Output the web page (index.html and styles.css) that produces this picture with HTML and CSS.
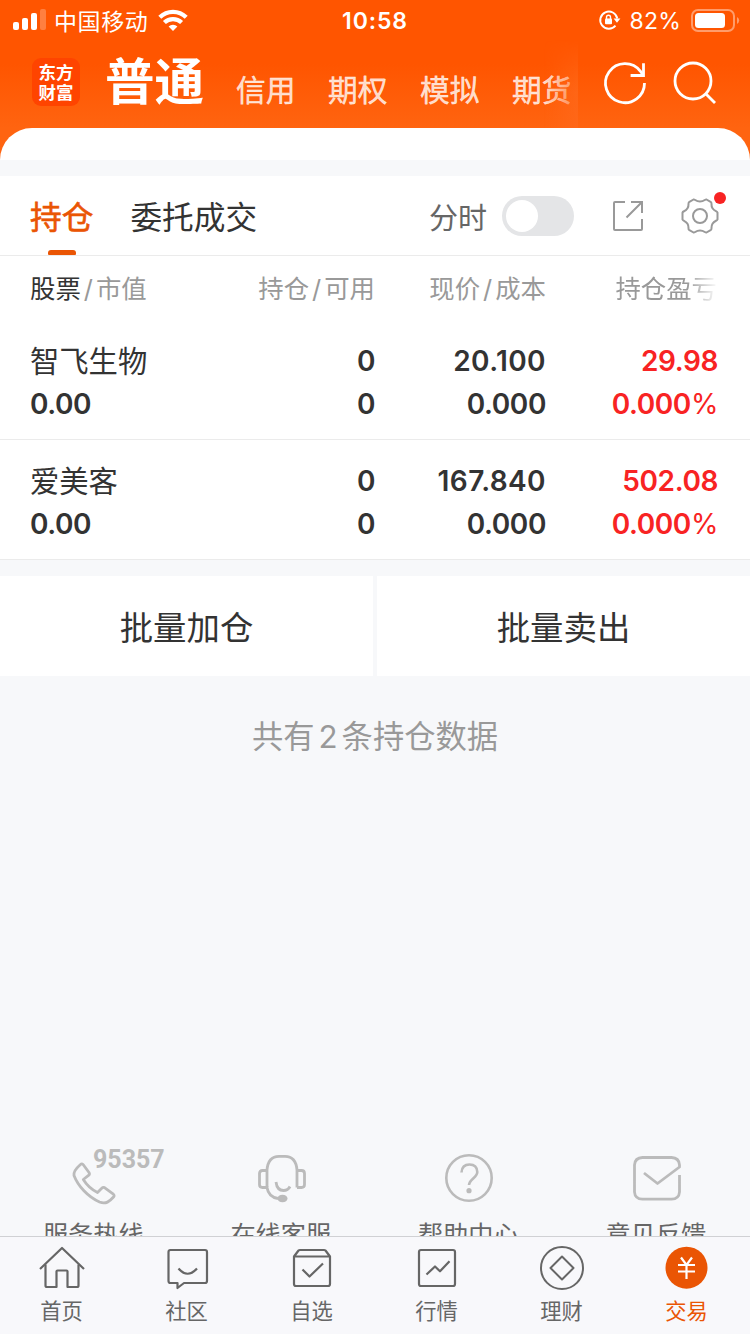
FILE: index.html
```html
<!DOCTYPE html>
<html lang="zh-CN">

<head>
	<meta charset="UTF-8">
	<meta name="viewport" content="width=device-width, initial-scale=1.0">
	<title>交易</title>
	<link rel="stylesheet" href="styles.css">
</head>

<body>
	<header class="header">
		<!-- 状态栏 -->
		<div class="status">
			<div class="status-left">
				<svg width="34" height="22" viewBox="0 0 34 22" fill="#fff">
					<rect x="0" y="13" width="6" height="8" rx="2" />
					<rect x="9" y="9" width="6" height="12" rx="2" />
					<rect x="18" y="4" width="6" height="17" rx="2" />
					<rect x="27" y="0" width="6" height="21" rx="2" opacity=".25" />
				</svg>
				<span class="carrier">中国移动</span>
				<svg class="wifi" width="30" height="22" viewBox="0 0 30 22" fill="none" stroke="#fff" stroke-width="4.200">
					<path d="M1.800 8.300a18.700 18.700 0 0 1 26.400 0" />
					<path d="M6.400 13.600a12.200 12.200 0 0 1 17.200 0" />
					<path d="M15 22l-4.400-4.400a6.200 6.200 0 0 1 8.800 0z" fill="#fff" stroke="none" />
				</svg>
			</div>
			<span class="time">10:58</span>
			<div class="status-right">
				<svg width="22" height="20" viewBox="0 0 22 20" fill="none" stroke="#fff" stroke-width="1.900">
					<path d="M16.500 15.600A8.600 8.600 0 1 1 18.300 8.500" />
					<path d="M14.600 8.500h6.800L18 12.700z" fill="#fff" stroke="none" />
					<rect x="6" y="8.400" width="7" height="5.800" rx="1" fill="#fff" stroke="none" />
					<path d="M7.500 9V7.200a2 2 0 0 1 4 0V9" stroke-width="1.400" />
				</svg>
				<span class="percent">82%</span>
				<svg class="battery" width="49" height="23" viewBox="0 0 49 23">
					<rect x="1" y="1" width="42" height="21" rx="6" fill="none" stroke="#fff" stroke-width="2" opacity=".42" />
					<rect x="4" y="4" width="30" height="15" rx="3.500" fill="#fff" />
					<path d="M46 8q2.200 1.300 2.200 3.500T46 15z" fill="#fff" opacity=".42" />
				</svg>
			</div>
		</div>
		<!-- 账户类型切换 -->
		<div class="nav">
			<div class="logo">东方<br>财富</div>
			<div class="accounts">
				<span class="account on">普通</span>
				<span class="account">信用</span>
				<span class="account">期权</span>
				<span class="account">模拟</span>
				<span class="account">期货</span>
			</div>
			<svg class="refresh" width="44" height="44" viewBox="0 0 44 44" fill="none" stroke="#fff" stroke-width="2.800">
				<path d="M41.500 22A19.500 19.500 0 1 1 37.500 10.300L40 14" />
				<path d="M40.500 2.200v12.300H27.600" />
			</svg>
			<svg class="search" width="44" height="44" viewBox="0 0 44 44" fill="none" stroke="#fff" stroke-width="2.800">
				<circle cx="20" cy="20" r="18" />
				<path d="M33 33l9 9" />
			</svg>
		</div>
	</header>
	<div class="sheet">
		<div class="sheet-inner"></div>
	</div>

	<main class="content">
		<div class="tabs">
			<span class="tab on">持仓</span>
			<span class="tab">委托成交</span>
			<span class="fenshi">分时</span>
			<div class="switch"></div>
			<svg class="share" width="32" height="32" viewBox="0 0 32 32" fill="none" stroke="#999" stroke-width="2">
				<path d="M13 2H3Q2 2 2 3v26Q2 30 3 30h26q1 0 1-1V19" />
				<path d="M19 2h11v11M30 2L14.500 17.500" />
			</svg>
			<div class="setting">
				<svg width="38" height="38" viewBox="0 0 38 38" fill="none" stroke="#999" stroke-width="2" stroke-linejoin="round">
					<path d="M12.500 2.500C14 2 14.500 4.500 19 4.500S24 2 25.500 2.500L30 5.200C31.300 6.200 29.500 8 31.500 11.200S36 14 36.500 15.500V22.500C36 24 33.500 23.500 31.500 26.800S31.300 31.800 30 32.800L25.500 35.500C24 36 23.500 33.500 19 33.500S14 36 12.500 35.500L8 32.800C6.700 31.800 8.500 30 6.500 26.800S2 24 1.500 22.500V15.500C2 14 4.500 14.500 6.500 11.200S6.700 6.200 8 5.200Z" />
					<circle cx="19" cy="19" r="7" />
				</svg>
			</div>
		</div>

		<div class="row thead">
			<span><b>股票</b><i>/</i>市值</span>
			<span>持仓<i>/</i>可用</span>
			<span>现价<i>/</i>成本</span>
			<span class="fade">持仓盈亏</span>
		</div>
		<div class="row stock">
			<div><p class="name">智飞生物</p><p>0.00</p></div>
			<div><p>0</p><p>0</p></div>
			<div><p class="price">20.100</p><p>0.000</p></div>
			<div class="red"><p>29.98</p><p>0.000<em>%</em></p></div>
		</div>
		<div class="row stock">
			<div><p class="name">爱美客</p><p>0.00</p></div>
			<div><p>0</p><p>0</p></div>
			<div><p class="price">167.840</p><p>0.000</p></div>
			<div class="red"><p>502.08</p><p>0.000<em>%</em></p></div>
		</div>

		<div class="batch">
			<div class="batch-btn">批量加仓</div>
			<div class="batch-btn">批量卖出</div>
		</div>
		<p class="total">共有<span>2</span>条持仓数据</p>

		<!-- 底部服务入口 -->
		<div class="services">
			<div class="service">
				<svg width="48" height="48" viewBox="0 0 48 48" fill="none" stroke="#bbb" stroke-width="2.800" stroke-linejoin="round">
					<path d="M10.500 10.500Q12 9 13.300 10.800L19 18.500Q20 20 18.800 21.200L13.300 25.500Q18.500 34 27.500 38.500L32 34Q33 33 34.500 33.600L43 39.800Q45 41.300 43.500 43C39.500 47.500 36 50.500 29.500 48C18 43 8 32 4 21.500Q3 17 10.500 10.500Z" />
				</svg>
				<span class="hotline">95357</span>
				<p>服务热线</p>
			</div>
			<div class="service">
				<svg width="48" height="48" viewBox="0 0 48 48" fill="none" stroke="#bbb" stroke-width="2.800">
					<path d="M9 33V16Q10 2.500 21 2.300h6Q38 2.500 39 16v17.500" />
					<path d="M9 16.500H4.500Q1.500 16.500 1.500 19.500v11Q1.500 33.500 4.500 33.500H9q1.500 9.500 11 11M39 16.500h4.500q3 0 3 3v11q0 3-3 3H39" />
					<path d="M18 28q1 8.500 7.500 8.500 4.500 0 6.500-4" />
					<ellipse cx="24.500" cy="44.500" rx="5" ry="3.800" fill="#bbb" stroke="none" />
				</svg>
				<p>在线客服</p>
			</div>
			<div class="service">
				<svg width="48" height="48" viewBox="0 0 48 48" fill="none" stroke="#bbb" stroke-width="2.600">
					<circle cx="24" cy="24" r="22.700" />
					<path d="M16.500 18.500Q17 10.500 24.500 10.500T32.300 18C32.300 23.500 24.300 25.500 24 31" />
					<circle cx="24" cy="36.700" r="2.600" fill="#bbb" stroke="none" />
				</svg>
				<p>帮助中心</p>
			</div>
			<div class="service">
				<svg width="48" height="48" viewBox="0 0 48 48" fill="none" stroke="#bbb" stroke-width="2.800" stroke-linejoin="round">
					<path d="M11 19l13.500 10.500L46.500 13V11Q46 3.700 38.500 3.500h-29Q2 3.700 1.500 11v27Q2 45 9.500 45.200h29Q46 45 46.500 38V21" />
				</svg>
				<p>意见反馈</p>
			</div>
		</div>
	</main>

	<footer class="tabbar">
		<div class="item">
			<svg width="46" height="46" viewBox="0 0 46 46" fill="none" stroke="#666" stroke-width="2.200" stroke-linejoin="round">
				<path d="M1 23L23 2l22 21" />
				<path d="M6.500 18.500V39.500q0 1.500 1.500 1.500H17.500V25.500q0-1 1-1h9q1 0 1 1V41H38q1.500 0 1.500-1.500V18.500" />
			</svg>
			<p>首页</p>
		</div>
		<div class="item">
			<svg width="46" height="46" viewBox="0 0 46 46" fill="none" stroke="#666" stroke-width="2.200" stroke-linejoin="round">
				<path d="M6 4H41q2 0 2 2V35q0 2-2 2H20l-6.500 5V37H6.500q-2 0-2-2V6q0-2 2-2z" />
				<path d="M14.500 22.500q9 10.500 18.500 0" />
			</svg>
			<p>社区</p>
		</div>
		<div class="item">
			<svg width="46" height="46" viewBox="0 0 46 46" fill="none" stroke="#666" stroke-width="2.200" stroke-linejoin="round">
				<path d="M5 10.500L9.500 4.500Q10 4 11 4h24q1 0 1.500.500L41 10.500V38q0 2-2 2H7q-2 0-2-2zM5 10.500h36" />
				<path d="M13.500 23.500l7 7L34 17.500" />
			</svg>
			<p>自选</p>
		</div>
		<div class="item">
			<svg width="46" height="46" viewBox="0 0 46 46" fill="none" stroke="#666" stroke-width="2.200" stroke-linejoin="round">
				<rect x="5" y="4" width="36" height="36" rx="2" />
				<path d="M12.500 28.500l8.500-8 5 4.800 9.500-10" />
			</svg>
			<p>行情</p>
		</div>
		<div class="item">
			<svg width="46" height="46" viewBox="0 0 46 46" fill="none" stroke="#666" stroke-width="2" stroke-linejoin="round">
				<circle cx="23" cy="22" r="21" />
				<path d="M23 10.500L34.500 22 23 33.500 11.500 22z" />
			</svg>
			<p>理财</p>
		</div>
		<div class="item on">
			<svg width="46" height="46" viewBox="0 0 46 46" fill="none" stroke="#fff" stroke-width="2.200">
				<circle cx="22.500" cy="21.700" r="21" fill="#ea5504" stroke="none" />
				<path d="M17 11.500l5.500 7.500 5.500-7.500M14 19h17M14 25.500h17M22.500 19v14" />
			</svg>
			<p>交易</p>
		</div>
	</footer>
</body>

</html>
```
FILE: styles.css
```css
* {
	margin: 0;
	padding: 0;
	box-sizing: border-box;
}

body {
	display: flex;
	flex-direction: column;
	height: 1334px;
	overflow: hidden;
	background: #f7f8fa;
	color: #333;
	font-family: Inter, "Noto Sans CJK SC", sans-serif;
}

svg {
	display: block;
	flex: none;
	/* 热线图标略超出画布 */
	overflow: visible;
}

/* 头部 */
.header {
	height: 128px;
	color: #fff;
	background: linear-gradient(#ff5500 50%, #ff6410);
}

.status {
	display: grid;
	grid-template-columns: 1fr auto 1fr;
	align-items: center;
	height: 40px;
	padding: 0 10px 0 13px;
}

.status-left,
.status-right {
	display: flex;
	align-items: center;
}

.status-right {
	justify-content: flex-end;
}

.carrier {
	margin-left: 7px;
	font-size: 23px;
	letter-spacing: 0.6px;
}

.wifi {
	margin-left: 10px;
}

.time {
	padding-top: 1px;
	margin-left: -3px;
	font-size: 23px;
	font-weight: 600;
	letter-spacing: 0.9px;
}

.percent {
	padding-top: 2px;
	margin-left: 9px;
	font-size: 23px;
	letter-spacing: 0.2px;
}

.battery {
	margin-left: 10px;
}

.nav {
	display: flex;
	align-items: center;
	height: 88px;
	padding: 0 32px;
}

.logo {
	width: 48px;
	height: 48px;
	margin-bottom: 4px;
	padding-top: 5px;
	border-radius: 9px;
	background: #ff4400;
	font-size: 17.5px;
	font-weight: 700;
	line-height: 19.5px;
	text-align: center;
}

.accounts {
	position: relative;
	display: flex;
	gap: 32px;
	width: 473px;
	height: 88px;
	margin-left: 25px;
}

.accounts::after {
	content: "";
	position: absolute;
	top: 0;
	right: 0;
	width: 34px;
	height: 88px;
	background: linear-gradient(90deg, rgba(255, 104, 26, 0), rgba(255, 104, 26, 0.8));
	-webkit-mask-image: linear-gradient(transparent, #000 60%);
	mask-image: linear-gradient(transparent, #000 60%);
}

.account {
	flex: none;
	width: 60px;
	font-size: 29.7px;
	font-weight: 400;
	line-height: 101px;
	color: rgba(255, 255, 255, 0.8);
	-webkit-text-stroke: 0.4px;
}

.account.on {
	width: 99px;
	font-size: 49.5px;
	font-weight: 700;
	line-height: 84px;
	color: #fff;
	-webkit-text-stroke: 0;
}

.refresh {
	margin: 0 25px 2px 25px;
}

.search {
	margin: 0 0 2px 1px;
}

.sheet {
	flex: none;
	height: 32px;
	background: #ff6410;
}

.sheet-inner {
	height: 32px;
	border-radius: 32px 32px 0 0;
	background: #fff;
}

/* 持仓 */
.content {
	flex: 1;
	min-height: 0;
	padding-top: 16px;
	overflow: hidden;
}

.tabs {
	display: flex;
	align-items: center;
	height: 80px;
	padding-left: 30px;
	background: #fff;
	border-bottom: 1px solid #ebebeb;
}

.tab {
	position: relative;
	height: 79px;
	margin-right: 37px;
	font-size: 31.7px;
	line-height: 83px;
}

.tab.on {
	color: #ea5504;
	-webkit-text-stroke: 0.6px;
}

.tab.on::after {
	content: "";
	position: absolute;
	left: 18px;
	bottom: 0;
	width: 28px;
	height: 5px;
	border-radius: 3px 3px 1px 1px;
	background: #ea5504;
}

.fenshi {
	margin-left: auto;
	margin-right: 15px;
	font-size: 29px;
	color: #666;
}

.switch {
	width: 72px;
	height: 40px;
	padding: 4px;
	border-radius: 20px;
	background: #e4e5e7;
}

.switch::before {
	content: "";
	display: block;
	width: 32px;
	height: 32px;
	border-radius: 50%;
	background: #fff;
}

.share {
	margin: 0 37px 0 38px;
}

.setting {
	position: relative;
	margin-right: 31px;
}

.setting::after {
	content: "";
	position: absolute;
	top: -5px;
	right: -7px;
	width: 12px;
	height: 12px;
	border-radius: 50%;
	background: #f82323;
}

.row {
	display: grid;
	grid-template-columns: 1fr 150px 171px 172px;
	padding: 0 32px 0 30px;
	background: #fff;
	text-align: right;
}

.row > :first-child {
	text-align: left;
}

.thead {
	height: 64px;
	font-size: 25.4px;
	line-height: 66px;
	color: #999;
	white-space: nowrap;
}

.thead b {
	font-weight: 400;
	color: #333;
}

.thead i {
	margin: 0 3px;
	font-style: normal;
}

.thead .fade {
	padding-right: 1px;
	-webkit-mask-image: linear-gradient(90deg, #000 82%, transparent);
	mask-image: linear-gradient(90deg, #000 82%, transparent);
}

.stock {
	height: 120px;
	padding-top: 20px;
	border-bottom: 1px solid #ebebeb;
	font-size: 28px;
	font-weight: 600;
	letter-spacing: -0.4px;
	line-height: 43px;
}

.stock .price {
	letter-spacing: 0.4px;
}

.name {
	font-size: 29.3px;
	font-weight: 400;
	letter-spacing: 0;
}

.red {
	color: #f82323;
}

.red em {
	font-style: normal;
	font-weight: 400;
}

.batch {
	display: grid;
	grid-template-columns: 1fr 1fr;
	gap: 4px;
	margin-top: 16px;
}

.batch-btn {
	height: 100px;
	background: #fff;
	font-size: 33.4px;
	line-height: 104px;
	text-align: center;
}

.total {
	height: 120px;
	font-size: 31.3px;
	line-height: 123px;
	text-align: center;
	color: #999;
}

.total span {
	margin: 0 4px;
}

.services {
	display: grid;
	grid-template-columns: repeat(4, 1fr);
	margin-top: 358px;
}

.service {
	position: relative;
	display: flex;
	flex-direction: column;
	align-items: center;
	font-size: 25.2px;
	color: #666;
}

.service svg {
	margin-left: 1px;
}

.service p {
	margin: 16px 1px 0 0;
	line-height: 34px;
}

.hotline {
	position: absolute;
	top: -9px;
	left: 93px;
	font-family: Roboto, sans-serif;
	font-size: 25px;
	font-weight: 700;
	line-height: 30px;
	color: #bbb;
}

/* 底部导航 */
.tabbar {
	display: grid;
	grid-template-columns: repeat(6, 1fr);
	height: 98px;
	border-top: 1px solid #d0d1d4;
	background: #f8f8fb;
}

.item {
	display: flex;
	flex-direction: column;
	align-items: center;
	padding: 9px 2px 0 0;
	font-size: 21.3px;
	line-height: 38px;
	color: #666;
}

.item.on {
	color: #ea5504;
}
```
